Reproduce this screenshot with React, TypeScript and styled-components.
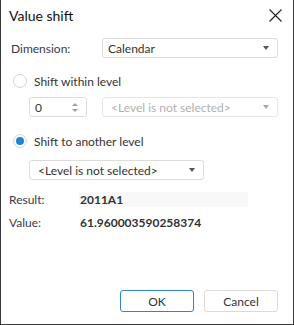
import React from "react";
import styled, { createGlobalStyle } from "styled-components";

const Global = createGlobalStyle`
  html, body { margin: 0; padding: 0; background: #fff; }
  body { font-family: "Segoe UI", Lato, "Open Sans", sans-serif; }
`;

const Dialog = styled.div`
  box-sizing: border-box;
  width: 294px;
  height: 325px;
  border: 1px solid #3a3a3a;
  border-top: none;
  background: #fff;
  display: flex;
  flex-direction: column;
  color: #333;
  font-size: 12px;
`;

const Header = styled.div`
  height: 30px;
  display: flex;
  align-items: center;
  justify-content: space-between;
  padding: 0 11px 0 8px;
`;

const Title = styled.div`
  font-size: 14px;
  color: #111;
`;

const Close = styled.button`
  border: none;
  background: none;
  padding: 0;
  width: 13px;
  height: 13px;
  display: flex;
  cursor: pointer;
`;

const Body = styled.div`
  flex: 1;
  display: flex;
  flex-direction: column;
  padding: 8px 15px 0 0;
`;

const Row = styled.div<{ $mt?: number; $pl?: number; $h?: number }>`
  display: flex;
  align-items: center;
  margin-top: ${(p) => p.$mt ?? 0}px;
  padding-left: ${(p) => p.$pl ?? 0}px;
  height: ${(p) => p.$h ?? 20}px;
`;

const Label = styled.div<{ $w: number }>`
  width: ${(p) => p.$w}px;
  color: #3a3a4a;
`;

const Combo = styled.div<{ $w: number; $disabled?: boolean; $pl?: number }>`
  box-sizing: border-box;
  width: ${(p) => p.$w}px;
  height: 20px;
  border: 1px solid ${(p) => (p.$disabled ? "#e6e6e6" : "#dcdcdc")};
  border-radius: 3px;
  display: flex;
  align-items: center;
  padding: 0 8px 0 ${(p) => p.$pl ?? 5}px;
  color: ${(p) => (p.$disabled ? "#b0b0b0" : "#333")};
  background: #fff;
`;

const ComboText = styled.span`
  flex: 1;
  white-space: nowrap;
`;

const Arrow = styled.span<{ $disabled?: boolean }>`
  width: 0;
  height: 0;
  border-left: 3.5px solid transparent;
  border-right: 3.5px solid transparent;
  border-top: 4px solid ${(p) => (p.$disabled ? "#a8a8a8" : "#555")};
`;

const Spin = styled.div`
  box-sizing: border-box;
  width: 58px;
  height: 20px;
  border: 1px solid #dcdcdc;
  border-radius: 3px;
  display: flex;
  align-items: center;
  padding: 0 8px 0 5px;
  margin-right: 15px;
  color: #333;
`;

const SpinArrows = styled.div`
  display: flex;
  flex-direction: column;
  gap: 3px;
`;

const Tri = styled.span<{ $up?: boolean }>`
  width: 0;
  height: 0;
  border-left: 3px solid transparent;
  border-right: 3px solid transparent;
  ${(p) => (p.$up ? "border-bottom: 3px solid #a0a0a0;" : "border-top: 3px solid #a0a0a0;")}
`;

const Radio = styled.span<{ $checked?: boolean }>`
  box-sizing: border-box;
  width: 14px;
  height: 14px;
  border-radius: 50%;
  border: 1px solid #d6d6d6;
  display: flex;
  align-items: center;
  justify-content: center;
  margin-right: 7px;
  &::after {
    content: "";
    width: 8px;
    height: 8px;
    border-radius: 50%;
    background: ${(p) => (p.$checked ? "#1e85d0" : "transparent")};
  }
`;

const RadioLabel = styled.span<{ $disabled?: boolean }>`
  color: ${(p) => (p.$disabled ? "#a0a0a0" : "#333")};
`;

const Value = styled.div<{ $bg?: boolean }>`
  font-weight: bold;
  color: #333;
  width: 168px;
  height: 15px;
  display: flex;
  align-items: center;
  padding-left: 1px;
  background: ${(p) => (p.$bg ? "#f8f8f8" : "transparent")};
`;

const Footer = styled.div`
  display: flex;
  justify-content: flex-end;
  gap: 10px;
  padding: 0 15px 12px 0;
`;

const Button = styled.button<{ $primary?: boolean }>`
  box-sizing: border-box;
  width: 74px;
  height: 22px;
  border-radius: 3px;
  border: 1px solid ${(p) => (p.$primary ? "#2f86c9" : "#dadada")};
  background: #fff;
  font-family: inherit;
  font-size: 12px;
  color: #333;
  padding: 0;
`;

export default function App() {
  return (
    <>
      <Global />
      <Dialog>
        <Header>
          <Title>Value shift</Title>
          <Close aria-label="Close">
            <svg width="13" height="13" viewBox="0 0 13 13">
              <path d="M0.5 0.5 L12.5 12.5 M12.5 0.5 L0.5 12.5" stroke="#222" strokeWidth="1.1" fill="none" />
            </svg>
          </Close>
        </Header>
        <Body>
          <Row $pl={10}>
            <Label $w={91}>Dimension:</Label>
            <Combo $w={176}>
              <ComboText>Calendar</ComboText>
              <Arrow />
            </Combo>
          </Row>
          <Row $mt={16} $pl={12} $h={14}>
            <Radio />
            <RadioLabel>Shift within level</RadioLabel>
          </Row>
          <Row $mt={9} $pl={28}>
            <Spin>
              <ComboText>0</ComboText>
              <SpinArrows>
                <Tri $up />
                <Tri />
              </SpinArrows>
            </Spin>
            <Combo $w={176} $disabled $pl={8}>
              <ComboText>&lt;Level is not selected&gt;</ComboText>
              <Arrow $disabled />
            </Combo>
          </Row>
          <Row $mt={17} $pl={12} $h={14}>
            <Radio $checked />
            <RadioLabel>Shift to another level</RadioLabel>
          </Row>
          <Row $mt={12} $pl={28}>
            <Combo $w={175} $pl={8}>
              <ComboText>&lt;Level is not selected&gt;</ComboText>
              <Arrow />
            </Combo>
          </Row>
          <Row $mt={12} $pl={8} $h={15}>
            <Label $w={70}>Result:</Label>
            <Value $bg>2011A1</Value>
          </Row>
          <Row $mt={8} $pl={8} $h={15}>
            <Label $w={70}>Value:</Label>
            <Value>61.960003590258374</Value>
          </Row>
        </Body>
        <Footer>
          <Button $primary>OK</Button>
          <Button>Cancel</Button>
        </Footer>
      </Dialog>
    </>
  );
}
